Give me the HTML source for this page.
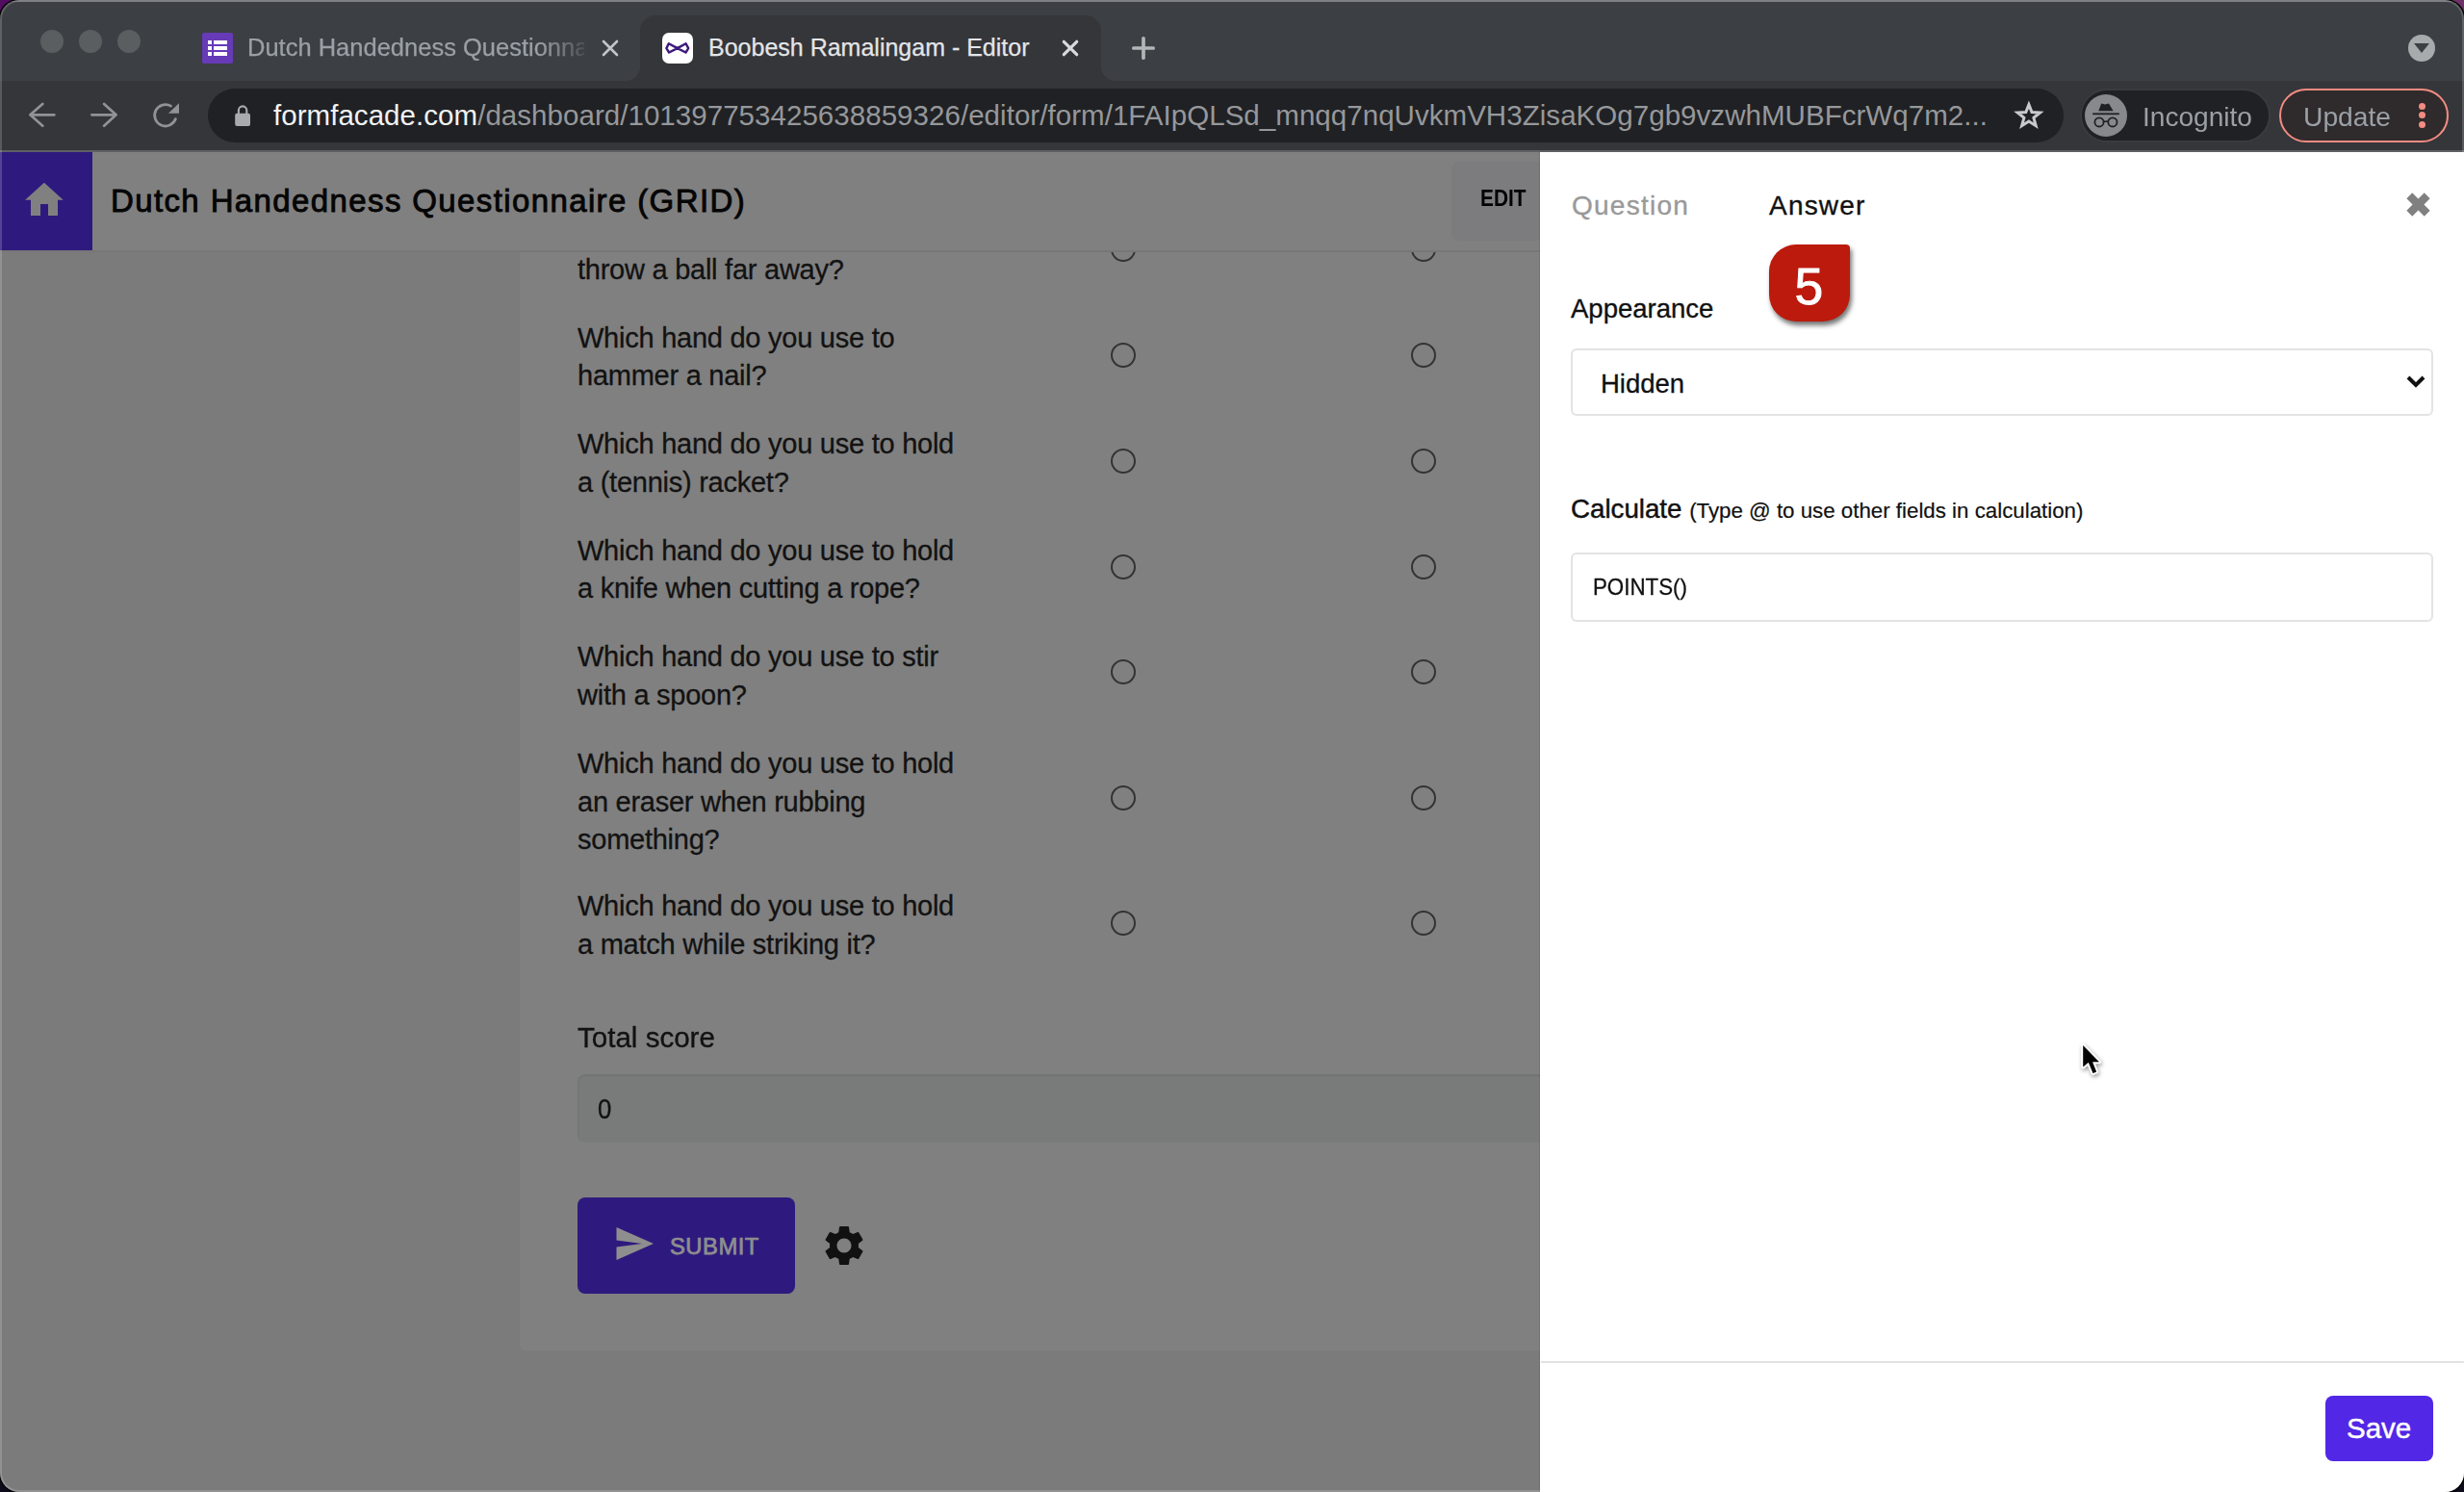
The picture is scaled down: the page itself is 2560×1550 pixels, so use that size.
<!DOCTYPE html>
<html><head><meta charset="utf-8">
<style>
*{margin:0;padding:0;box-sizing:border-box;}
html,body{width:2560px;height:1550px;overflow:hidden;background:#0d0b1c;font-family:"Liberation Sans",sans-serif;}
.a{position:absolute;}
.t{position:absolute;white-space:nowrap;line-height:1;}
#win{position:absolute;left:0;top:0;width:2560px;height:1550px;border-radius:20px;overflow:hidden;background:#3c3f43;box-shadow:0 0 0 1.5px #000;}
#tabs{left:0;top:0;width:2560px;height:84px;background:#3c3f43;}
#toolbar{left:0;top:84px;width:2560px;height:72px;background:#35363a;border-bottom:0;}
.dot{position:absolute;width:24px;height:24px;border-radius:50%;background:#5b5e61;top:31px;}
#page{left:0;top:158px;width:2560px;height:1392px;background:#7b7b7b;overflow:hidden;}
.q{position:absolute;left:600px;font-size:29px;line-height:39.7px;letter-spacing:-0.25px;color:#121212;white-space:nowrap;-webkit-text-stroke:0.3px #121212;}
.r{position:absolute;width:26px;height:26px;border:2px solid #333;border-radius:50%;}
</style></head>
<body>
<div class="a" style="left:0;top:0;width:60px;height:60px;background:#520c60;"></div>
<div class="a" style="right:0;top:0;width:60px;height:60px;background:#6e3266;"></div>
<div id="win">
  <!-- TAB STRIP -->
  <div id="tabs" class="a">
    <div class="dot" style="left:42px"></div>
    <div class="dot" style="left:82px"></div>
    <div class="dot" style="left:122px"></div>
    <!-- tab 1 -->
    <div class="a" style="left:210px;top:34px;width:32px;height:32px;background:#673ab7;border-radius:2px;">
      <div class="a" style="left:6px;top:8px;width:4px;height:4px;background:#fff"></div>
      <div class="a" style="left:12px;top:8px;width:14px;height:4px;background:#fff"></div>
      <div class="a" style="left:6px;top:14px;width:4px;height:4px;background:#fff"></div>
      <div class="a" style="left:12px;top:14px;width:14px;height:4px;background:#fff"></div>
      <div class="a" style="left:6px;top:20px;width:4px;height:4px;background:#fff"></div>
      <div class="a" style="left:12px;top:20px;width:14px;height:4px;background:#fff"></div>
    </div>
    <div class="t" style="left:257px;top:37px;font-size:25.5px;color:#9aa0a6;width:350px;overflow:hidden;-webkit-text-stroke:0.25px #9aa0a6;-webkit-mask-image:linear-gradient(to right,#000 87%,rgba(0,0,0,0.2) 100%);">Dutch Handedness Questionnaire (GRID)</div>
    <svg class="a" style="left:624px;top:40px" width="20" height="20" viewBox="0 0 20 20"><path d="M3 3L17 17M17 3L3 17" stroke="#c3c6c9" stroke-width="2.6" stroke-linecap="round"/></svg>
    <!-- tab 2 active -->
    <div class="a" style="left:665px;top:16px;width:479px;height:68px;background:#35363a;border-radius:16px 16px 0 0;"></div>
    <div class="a" style="left:649px;top:68px;width:16px;height:16px;background:radial-gradient(circle at 0 0,transparent 16px,#35363a 16.5px);"></div>
    <div class="a" style="left:1144px;top:68px;width:16px;height:16px;background:radial-gradient(circle at 100% 0,transparent 16px,#35363a 16.5px);"></div>
    <div class="a" style="left:688px;top:34px;width:32px;height:32px;background:#fff;border-radius:7px;">
      <svg class="a" style="left:0;top:0" width="32" height="32" viewBox="0 0 32 32"><path d="M15.8 16.1L6.8 11.2L4.4 16.1L7.1 20.5Z M15.8 16.1L24.6 11.2L27.2 16.1L24.5 20.5Z" fill="none" stroke="#3d1a7a" stroke-width="2.4" stroke-linejoin="round"/><ellipse cx="15.8" cy="16.1" rx="2.2" ry="1.6" fill="#3d1a7a"/></svg>
    </div>
    <div class="t" style="left:736px;top:37px;font-size:25px;color:#e3e5e8;-webkit-text-stroke:0.25px #e3e5e8;">Boobesh Ramalingam - Editor</div>
    <svg class="a" style="left:1102px;top:40px" width="20" height="20" viewBox="0 0 20 20"><path d="M3.3 3.3L16.7 16.7M16.7 3.3L3.3 16.7" stroke="#d9dadc" stroke-width="3.2" stroke-linecap="round"/></svg>
    <svg class="a" style="left:1176px;top:38px;overflow:visible" width="24" height="24" viewBox="0 0 24 24"><path d="M12 1.8V22.2M1.8 12H22.2" stroke="#b3b6b9" stroke-width="3.7" stroke-linecap="round"/></svg>
    <!-- dropdown -->
    <div class="a" style="left:2502px;top:36px;width:28px;height:28px;border-radius:50%;background:#a8abae;">
      <svg class="a" style="left:6px;top:9px" width="16" height="12" viewBox="0 0 16 12"><path d="M0 0H16L8 10Z" fill="#3c3f43"/></svg>
    </div>
  </div>
  <!-- TOOLBAR -->
  <div id="toolbar" class="a">
    <svg class="a" style="left:29px;top:22px" width="30" height="28" viewBox="0 0 30 28"><path d="M27.4 13.3H2.6M15.3 1.9L2.4 13.3L15.3 24.7" fill="none" stroke="#909396" stroke-width="2.7" stroke-linecap="round" stroke-linejoin="round"/></svg>
    <svg class="a" style="left:93px;top:22px" width="30" height="28" viewBox="0 0 30 28"><path d="M2.4 13.3H27.2M15.1 1.9L27.6 13.3L15.1 24.7" fill="none" stroke="#909396" stroke-width="2.7" stroke-linecap="round" stroke-linejoin="round"/></svg>
    <svg class="a" style="left:157px;top:22px" width="32" height="30" viewBox="0 0 32 30"><path d="M25.4 17.6A11.2 11.2 0 1 1 20.5 4.1" fill="none" stroke="#909396" stroke-width="2.8" stroke-linecap="round"/><path d="M29 1.2V11.8H17.9Z" fill="#909396"/></svg>
    <div class="a" style="left:216px;top:8px;width:1928px;height:56px;background:#202124;border-radius:28px;"></div>
    <svg class="a" style="left:243px;top:22px" width="18" height="27" viewBox="0 0 18 27"><path d="M4.9 12.5V8.6A4.2 4.2 0 0 1 13.3 8.6V12.5" fill="none" stroke="#a8abae" stroke-width="2.1"/><rect x="1.2" y="11.7" width="15.8" height="13.2" rx="2" fill="#a8abae"/></svg>
    <div class="t" style="left:284px;top:21.3px;font-size:29.5px;letter-spacing:0.045px;color:#96989b;"><span style="color:#f1f3f4">formfacade.com</span>/dashboard/101397753425638859326/editor/form/1FAIpQLSd_mnqq7nqUvkmVH3ZisaKOg7gb9vzwhMUBFcrWq7m2...</div>
    <svg class="a" style="left:2092px;top:20px" width="32" height="32" viewBox="0 0 32 32"><path d="M15.9 4.6L19 12.6L27.6 13L20.9 18.4L23.2 26.7L15.9 22L8.6 26.7L10.9 18.4L4.2 13L12.8 12.6Z" fill="none" stroke="#c8cacc" stroke-width="3" stroke-linejoin="miter"/></svg>
    <div class="a" style="left:2161px;top:8px;width:198px;height:56px;background:#202124;border:2px solid #3a3b3f;border-radius:28px;"></div>
    <div class="a" style="left:2166px;top:13.8px;width:44px;height:44px;border-radius:50%;background:#87898c;">
      <svg class="a" style="left:0;top:0" width="44" height="44" viewBox="0 0 44 44"><path d="M17.2 9.6L21 10.4L25 9.6L29.6 17.2H14.3Z" fill="#202124"/><rect x="8.2" y="19.4" width="27.6" height="1.8" fill="#202124"/><circle cx="15" cy="28.9" r="4.6" fill="none" stroke="#202124" stroke-width="1.8"/><circle cx="28.9" cy="28.9" r="4.6" fill="none" stroke="#202124" stroke-width="1.8"/><path d="M19.5 28.2H24.4" stroke="#202124" stroke-width="1.6"/></svg>
    </div>
    <div class="t" style="left:2225.5px;top:22.5px;font-size:28.5px;color:#9aa0a6;transform:scaleX(0.985);transform-origin:0 0;">Incognito</div>
    <div class="a" style="left:2368px;top:8px;width:176px;height:56px;background:#2f2a2b;border:2px solid #f28b82;border-radius:28px;"></div>
    <div class="t" style="left:2393px;top:22.5px;font-size:28.5px;color:#9aa0a6;transform:scaleX(0.99);transform-origin:0 0;">Update</div>
    <div class="a" style="left:2512.5px;top:23px;width:7px;height:7px;border-radius:50%;background:#f28b82;"></div>
    <div class="a" style="left:2512.5px;top:32.1px;width:7px;height:7px;border-radius:50%;background:#f28b82;"></div>
    <div class="a" style="left:2512.5px;top:42.4px;width:7px;height:7px;border-radius:50%;background:#f28b82;"></div>
  </div>
  <div class="a" style="left:0;top:156px;width:2560px;height:2px;background:#5e5f63;"></div>
  <!-- PAGE -->
  <div id="page" class="a">
    <!-- header -->
    <div class="a" style="left:0;top:0;width:1600px;height:104px;background:#808080;border-bottom:2px solid #777;"></div>
    <div class="a" style="left:0;top:0;width:96px;height:102px;background:#2e1a7e;">
      <svg class="a" style="left:26px;top:31px" width="40" height="36" viewBox="0 0 40 36"><path d="M19.9 0.8L39.7 18.8H34V35H24V23H16V35H6V18.8H0.1Z" fill="#808080"/></svg>
    </div>
    <div class="t" style="left:115px;top:34px;font-size:33px;letter-spacing:1.38px;color:#050505;-webkit-text-stroke:0.9px #050505;">Dutch Handedness Questionnaire (GRID)</div>
    <div class="a" style="left:1508px;top:10px;width:120px;height:82px;background:#7c7c7e;border-radius:8px;"></div>
    <div class="t" style="left:1538px;top:36px;font-size:24px;font-weight:bold;color:#000;transform:scaleX(0.87);transform-origin:0 0;">EDIT</div>
    <!-- card -->
    <div class="a" style="left:540px;top:104px;width:1100px;height:1141px;background:#808080;border-radius:0 0 0 6px;">
    </div>
  </div>
  <div class="q" style="top:261.2px;">throw a ball far away?</div>
  <div class="q" style="top:331.6px;">Which hand do you use to<br>hammer a nail?</div>
  <div class="q" style="top:442.1px;">Which hand do you use to hold<br>a (tennis) racket?</div>
  <div class="q" style="top:552.6px;">Which hand do you use to hold<br>a knife when cutting a rope?</div>
  <div class="q" style="top:663.1px;">Which hand do you use to stir<br>with a spoon?</div>
  <div class="q" style="top:773.8px;">Which hand do you use to hold<br>an eraser when rubbing<br>something?</div>
  <div class="q" style="top:922px;">Which hand do you use to hold<br>a match while striking it?</div>
  <!-- radios -->
  <div class="a" style="left:0;top:262px;width:1600px;height:900px;overflow:hidden;">
    <div class="r" style="left:1154px;top:-16px;"></div>
    <div class="r" style="left:1466px;top:-16px;"></div>
  </div>
  <div class="r" style="left:1154px;top:356px;"></div><div class="r" style="left:1466px;top:356px;"></div>
  <div class="r" style="left:1154px;top:466px;"></div><div class="r" style="left:1466px;top:466px;"></div>
  <div class="r" style="left:1154px;top:576px;"></div><div class="r" style="left:1466px;top:576px;"></div>
  <div class="r" style="left:1154px;top:685px;"></div><div class="r" style="left:1466px;top:685px;"></div>
  <div class="r" style="left:1154px;top:816px;"></div><div class="r" style="left:1466px;top:816px;"></div>
  <div class="r" style="left:1154px;top:946px;"></div><div class="r" style="left:1466px;top:946px;"></div>
  <!-- total score -->
  <div class="t" style="left:600px;top:1063px;font-size:30px;color:#121212;-webkit-text-stroke:0.35px #121212;transform:scaleX(0.985);transform-origin:0 0;">Total score</div>
  <div class="a" style="left:600px;top:1116px;width:1000px;height:71px;background:#797b7a;border-radius:8px 0 0 8px;box-shadow:inset 1px 2px 2px rgba(0,0,0,0.06);"></div>
  <div class="t" style="left:620.5px;top:1136.5px;font-size:30px;color:#121212;-webkit-text-stroke:0.35px #121212;transform:scaleX(0.86);transform-origin:0 0;">0</div>
  <!-- submit -->
  <div class="a" style="left:600px;top:1244px;width:226px;height:100px;background:#2e1a7e;border-radius:8px;"></div>
  <svg class="a" style="left:640px;top:1275px" width="40" height="34" viewBox="0 0 40 34"><path d="M0.5 0L39 17L0.5 34V20.5L27 17L0.5 13.5Z" fill="#8e8e8e"/></svg>
  <div class="t" style="left:696px;top:1282.5px;font-size:23.8px;letter-spacing:0.5px;color:#8e8e8e;-webkit-text-stroke:0.75px #8e8e8e;">SUBMIT</div>
  <svg class="a" style="left:852.3px;top:1268.8px" width="50" height="50" viewBox="0 0 24 24"><path fill="#111" d="M19.14 12.94c.04-.3.06-.61.06-.94 0-.32-.02-.64-.07-.94l2.03-1.58a.49.49 0 0 0 .12-.61l-1.92-3.32a.488.488 0 0 0-.59-.22l-2.39.96c-.5-.38-1.03-.7-1.62-.94l-.36-2.54a.484.484 0 0 0-.48-.41h-3.84c-.24 0-.43.17-.47.41l-.36 2.54c-.59.24-1.13.57-1.62.94l-2.39-.96c-.22-.08-.47 0-.59.22L2.74 8.87c-.12.21-.08.47.12.61l2.03 1.58c-.05.3-.09.63-.09.94s.02.64.07.94l-2.03 1.58a.49.49 0 0 0-.12.61l1.92 3.32c.12.22.37.29.59.22l2.39-.96c.5.38 1.03.7 1.62.94l.36 2.54c.05.24.24.41.48.41h3.84c.24 0 .44-.17.47-.41l.36-2.54c.59-.24 1.13-.56 1.62-.94l2.39.96c.22.08.47 0 .59-.22l1.92-3.32c.12-.22.07-.47-.12-.61l-2.01-1.58zM12 15.6c-1.98 0-3.6-1.62-3.6-3.6s1.62-3.6 3.6-3.6 3.6 1.62 3.6 3.6-1.62 3.6-3.6 3.6z"/></svg>

  <!-- RIGHT PANEL -->
  <div class="a" style="left:1600px;top:158px;width:960px;height:1392px;background:#fff;"></div>
  <div class="a" style="left:1599px;top:158px;width:1px;height:1392px;background:rgba(0,0,0,0.09);"></div>
  <div class="t" style="left:1633px;top:200px;font-size:28px;letter-spacing:1.25px;color:#999;-webkit-text-stroke:0.35px #999;">Question</div>
  <div class="t" style="left:1838px;top:200px;font-size:28px;letter-spacing:1.2px;color:#111;-webkit-text-stroke:0.35px #111;">Answer</div>
  <svg class="a" style="left:2499.5px;top:200px" width="25" height="25" viewBox="0 0 25 25"><path d="M3.3 3.3L21.7 21.7M21.7 3.3L3.3 21.7" stroke="#808080" stroke-width="8.3"/></svg>
  <div class="t" style="left:1632px;top:307px;font-size:27.5px;color:#111;-webkit-text-stroke:0.35px #111;">Appearance</div>
  <!-- badge -->
  <div class="a" style="left:1838px;top:254px;width:84px;height:80px;background:#bb1a0d;border-radius:28px 4px 28px 28px;box-shadow:2px 4px 5px rgba(0,0,0,0.55);"></div>
  <div class="t" style="left:1864.5px;top:270.5px;font-size:53.5px;color:#fff;-webkit-text-stroke:0.9px #fff;">5</div>
  <!-- select -->
  <div class="a" style="left:1632px;top:362px;width:896px;height:70px;border:2px solid #e3e3e3;border-radius:6px;background:#fff;"></div>
  <div class="t" style="left:1663px;top:385px;font-size:27.5px;color:#111;-webkit-text-stroke:0.3px #111;">Hidden</div>
  <svg class="a" style="left:2500px;top:389px" width="20" height="14" viewBox="0 0 20 14"><path d="M2 3L10 11L18 3" fill="none" stroke="#111" stroke-width="4"/></svg>
  <!-- calculate -->
  <div class="t" style="left:1632px;top:515px;font-size:27.7px;color:#111;-webkit-text-stroke:0.45px #111;">Calculate <span style="font-size:22.3px;-webkit-text-stroke:0.2px #111;">(Type @ to use other fields in calculation)</span></div>
  <div class="a" style="left:1632px;top:574px;width:896px;height:72px;border:2px solid #e3e3e3;border-radius:6px;background:#fff;"></div>
  <div class="t" style="left:1655px;top:598px;font-size:24.5px;color:#111;-webkit-text-stroke:0.3px #111;transform:scaleX(0.91);transform-origin:0 0;">POINTS()</div>
  <!-- footer -->
  <div class="a" style="left:1601px;top:1414px;width:959px;height:2px;background:#e2e2e2;"></div>
  <div class="a" style="left:2416px;top:1450px;width:112px;height:68px;background:#5227e6;border-radius:8px;"></div>
  <div class="t" style="left:2438px;top:1469px;font-size:29.5px;color:#fff;-webkit-text-stroke:0.45px #fff;">Save</div>
  <!-- cursor -->
  <svg class="a" style="left:2158px;top:1080px;overflow:visible" width="34" height="40" viewBox="0 0 34 40"><path d="M6.2 6.1V28.5L11.8 23.8L16.5 34.9L20.2 33.6L16.1 23.2H23Z" fill="#000" stroke="#fff" stroke-width="4" stroke-linejoin="round" paint-order="stroke" style="filter:drop-shadow(1px 2px 2px rgba(0,0,0,0.4))"/></svg>
  <div class="a" style="left:0;top:0;width:2560px;height:2px;background:rgba(255,255,255,0.2);"></div>
  <!-- window border highlight -->
  <div class="a" style="left:0;top:0;width:2560px;height:1550px;border-radius:20px;box-shadow:inset 0 0 0 2px rgba(255,255,255,0.18);pointer-events:none;"></div>
</div>
</body></html>
